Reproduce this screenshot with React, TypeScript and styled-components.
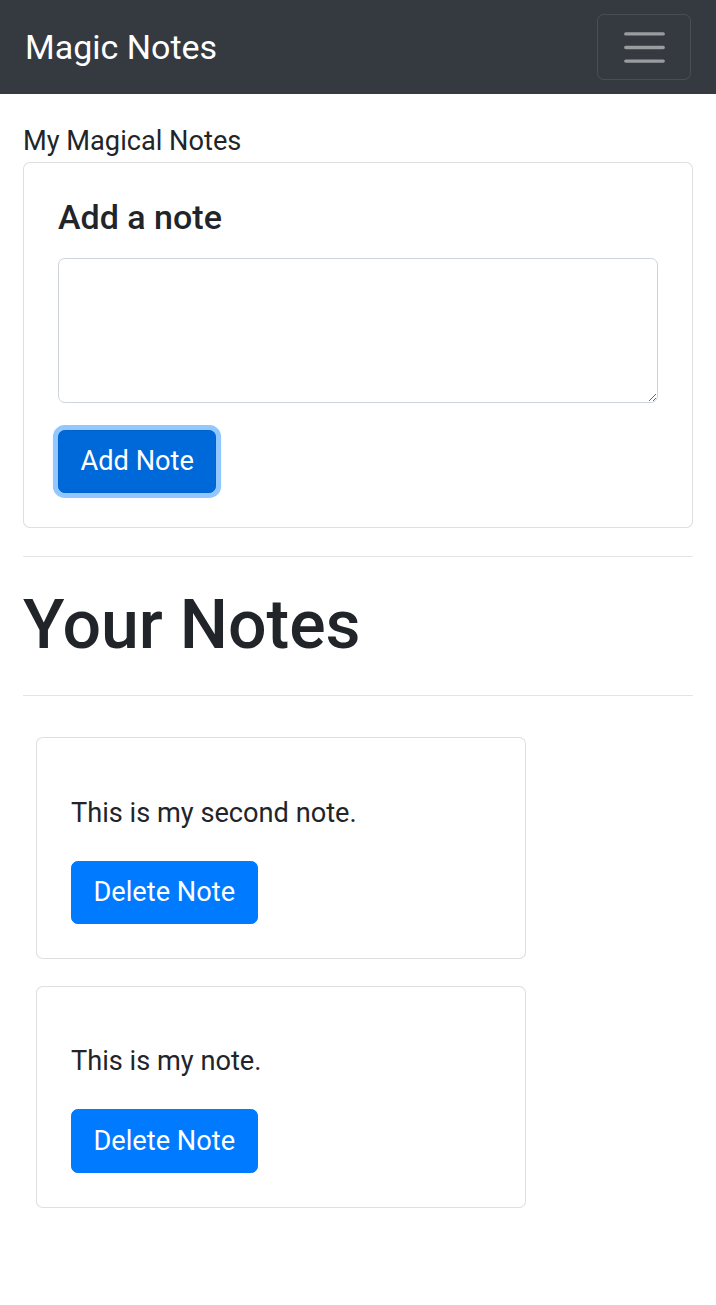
import React from "react";
import styled, { createGlobalStyle } from "styled-components";

const S = 1.7;
const px = (v: number) => `${(v * S).toFixed(2)}px`;

const Global = createGlobalStyle`
  * { box-sizing: border-box; }
  html, body { margin: 0; padding: 0; background: #fff; }
  body {
    font-family: Roboto, "Noto Sans", "Liberation Sans", sans-serif;
    font-size: ${px(16)};
    line-height: 1.5;
    color: #212529;
  }
`;

const Navbar = styled.nav`
  display: flex;
  align-items: center;
  justify-content: space-between;
  background: #343a40;
  padding: 13px 25px 13px;
`;

const Brand = styled.a`
  color: #fff;
  font-size: ${px(20)};
  line-height: 1.5;
  padding: ${px(5)} 0;
  text-decoration: none;
`;

const Toggler = styled.button`
  display: flex;
  align-items: center;
  justify-content: center;
  background: transparent;
  border: 1px solid rgba(255, 255, 255, 0.1);
  border-radius: ${px(4)};
  padding: ${px(4)} ${px(12)};
  margin: 0;
  svg { display: block; width: ${px(30)}; height: ${px(30)}; }
`;

const Main = styled.main`
  padding: 27px 23px 60px;
`;

const Lead = styled.div`
  font-size: ${px(16)};
  line-height: 1.5;
`;

const Card = styled.div<{ $narrow?: boolean }>`
  border: 1px solid rgba(0, 0, 0, 0.125);
  border-radius: ${px(4)};
  background: #fff;
  width: ${(p) => (p.$narrow ? px(288) : "auto")};
  margin: ${(p) => (p.$narrow ? `${px(8)} 13px` : "0")};
`;

const CardBody = styled.div`
  padding: ${px(20)};
`;

const CardTitle = styled.h5`
  margin: 0 0 ${px(12)};
  font-size: ${px(20)};
  font-weight: 500;
  line-height: 1.2;
`;

const TextArea = styled.textarea`
  display: block;
  width: 100%;
  height: calc(${px(84)} + 2px);
  padding: ${px(6)} ${px(12)};
  font: inherit;
  color: #495057;
  border: 1px solid #ced4da;
  border-radius: ${px(4)};
  margin: 0 0 ${px(16)};
  background: #fff;
`;

const Button = styled.button<{ $focused?: boolean }>`
  display: inline-block;
  font-family: inherit;
  font-size: ${px(16)};
  line-height: 1.5;
  padding: ${px(6)} 21.5px;
  border-radius: ${px(4)};
  color: #fff;
  background: ${(p) => (p.$focused ? "#0069d9" : "#007bff")};
  border: 1px solid ${(p) => (p.$focused ? "#0062cc" : "#007bff")};
  box-shadow: ${(p) => (p.$focused ? `0 0 0 ${px(3)} rgba(38, 143, 255, 0.5)` : "none")};
  cursor: pointer;
`;

const Rule = styled.hr`
  border: 0;
  border-top: ${px(1)} solid rgba(0, 0, 0, 0.1);
  margin: 28px 0;
`;

const Heading = styled.h1`
  font-size: ${px(40)};
  font-weight: 500;
  line-height: 1.2;
  margin: 0 0 ${px(8)};
`;

const NoteText = styled.p`
  margin: 0 0 ${px(16)};
`;

const Notes = styled.div`
  display: flex;
  flex-direction: column;
`;

const notes = ["This is my second note.", "This is my note."];

export default function App() {
  return (
    <>
      <Global />
      <Navbar>
        <Brand href="#">Magic Notes</Brand>
        <Toggler aria-label="Toggle navigation">
          <svg viewBox="0 0 30 30">
            <path
              d="M4 7h22M4 15h22M4 23h22"
              stroke="rgba(255,255,255,0.5)"
              strokeWidth="2"
              strokeLinecap="round"
              strokeMiterlimit="10"
            />
          </svg>
        </Toggler>
      </Navbar>
      <Main>
        <Lead>My Magical Notes</Lead>
        <Card>
          <CardBody>
            <CardTitle>Add a note</CardTitle>
            <TextArea />
            <Button $focused>Add Note</Button>
          </CardBody>
        </Card>
        <Rule />
        <Heading>Your Notes</Heading>
        <Rule />
        <Notes>
          {notes.map((n) => (
            <Card $narrow key={n}>
              <CardBody>
                <CardTitle />
                <NoteText>{n}</NoteText>
                <Button>Delete Note</Button>
              </CardBody>
            </Card>
          ))}
        </Notes>
      </Main>
    </>
  );
}
